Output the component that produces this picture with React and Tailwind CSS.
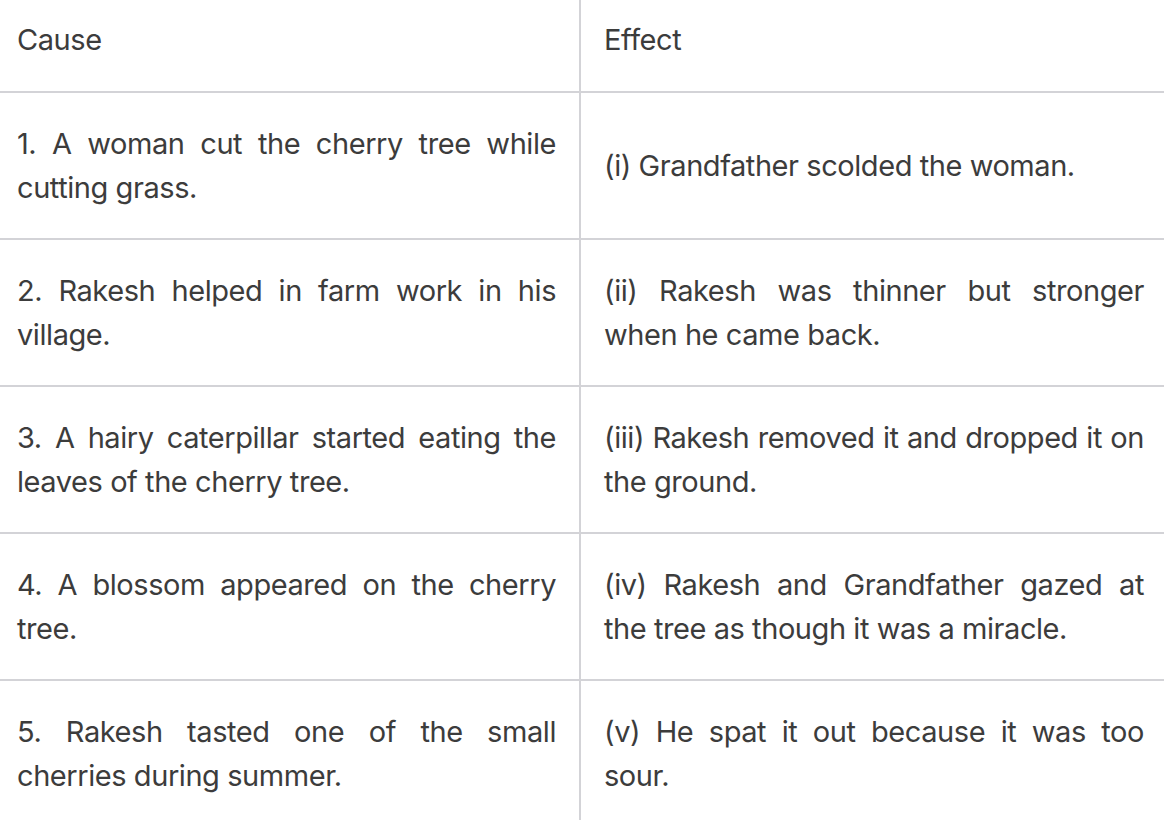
const rows = [
  {
    cause: ["1. A woman cut the cherry tree while", "cutting grass."],
    effect: ["(i) Grandfather scolded the woman."],
  },
  {
    cause: ["2. Rakesh helped in farm work in his", "village."],
    effect: ["(ii) Rakesh was thinner but stronger", "when he came back."],
  },
  {
    cause: ["3. A hairy caterpillar started eating the", "leaves of the cherry tree."],
    effect: ["(iii) Rakesh removed it and dropped it on", "the ground."],
  },
  {
    cause: ["4. A blossom appeared on the cherry", "tree."],
    effect: ["(iv) Rakesh and Grandfather gazed at", "the tree as though it was a miracle."],
  },
  {
    cause: ["5. Rakesh tasted one of the small", "cherries during summer."],
    effect: ["(v) He spat it out because it was too", "sour."],
  },
];

function Lines({ lines }) {
  return (
    <div>
      {lines.map((line, i) =>
        i < lines.length - 1 ? (
          <div key={i} className="text-justify [text-align-last:justify] whitespace-nowrap">
            {line}
          </div>
        ) : (
          <div key={i} className="whitespace-nowrap">{line}</div>
        )
      )}
    </div>
  );
}

export default function App() {
  return (
    <div
      className="w-[1164px] h-[820px] overflow-hidden bg-white text-[#3c3c3c] text-[29px] leading-[44px] tracking-[-0.015em]"
      style={{ fontFamily: "Inter, 'Noto Sans', sans-serif" }}
    >
      <div className="flex h-[93px] border-b-2 border-[#d3d3d7]">
        <div className="w-[581px] border-r-2 border-[#d3d3d7] pl-[17px] pt-[18px]">Cause</div>
        <div className="flex-1 pl-[23px] pt-[18px]">Effect</div>
      </div>
      {rows.map((row, i) => (
        <div key={i} className="flex h-[147px] border-b-2 border-[#d3d3d7]">
          <div className="w-[581px] border-r-2 border-[#d3d3d7] pl-[17px] pr-[23px] flex items-center">
            <div className="w-full">
              <Lines lines={row.cause} />
            </div>
          </div>
          <div className="flex-1 pl-[23px] pr-[20px] flex items-center">
            <div className="w-full">
              <Lines lines={row.effect} />
            </div>
          </div>
        </div>
      ))}
    </div>
  );
}
